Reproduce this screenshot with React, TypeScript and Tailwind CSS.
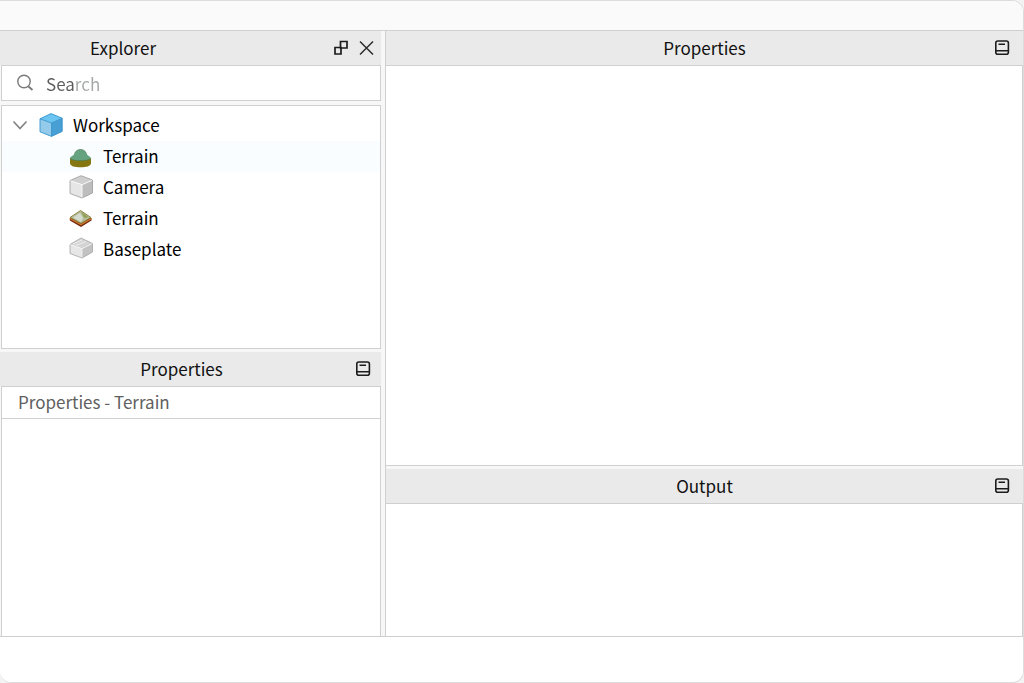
import type { ReactNode } from 'react'

type TreeItem = {
  id: string
  name: string
  icon: ReactNode
  hovered?: boolean
}

function CubeIcon() {
  return (
    <svg width="24" height="24" viewBox="0 0 24 24" aria-hidden="true">
      <path d="M12 0.6 23.200 5.200 12.500 10 1 5.800Z" fill="#6cc4f0" />
      <path d="M1 5.800 12.500 10V23.400L1 18.800Z" fill="#94caea" />
      <path d="M12.500 10 23.200 5.200V18.400L12.500 23.400Z" fill="#489fd3" />
      <path
        d="M12 0.6 23.200 5.200V18.400L12.500 23.400 1 18.800V5.800ZM1 5.800 12.500 10 23.200 5.200M12.500 10V23.400"
        fill="none"
        stroke="#3794cd"
        strokeWidth="0.9"
        strokeLinejoin="round"
      />
    </svg>
  )
}

function HillIcon() {
  return (
    <svg width="24" height="24" viewBox="0 0 24 24" aria-hidden="true">
      <path d="M1 14V19C1 22.300 6 23.300 11.500 23.300S22 22.300 22 19V14Z" fill="#85760f" />
      <path
        d="M1 14.500C1.500 12 4 12.500 5.500 9.500 7 6.500 9 5.500 11.500 5.500S16 6.500 17.500 9.500C19 12.500 21.500 12 22 14.500 20 16 16 16.500 11.500 16.500S3 16 1 14.500Z"
        fill="#65a27f"
      />
      <path
        d="M1.200 14.500C3 16.200 7 16.700 11.500 16.700S20 16.200 21.800 14.500M5.500 9.500C7 6.500 9 5.500 11.500 5.500S16 6.500 17.500 9.500"
        fill="none"
        stroke="#4b7d52"
        strokeWidth="0.7"
      />
    </svg>
  )
}

function GrayCubeIcon() {
  return (
    <svg width="24" height="24" viewBox="0 0 24 24" aria-hidden="true">
      <path d="M12 0.700 23.500 5 13 9.500 1 5.500Z" fill="#cfcfcf" />
      <path d="M1 5.500 13 9.500V23L1 18.500Z" fill="#e6e6e6" />
      <path d="M13 9.500 23.500 5V18L13 23Z" fill="#bdbdbd" />
      <path
        d="M12 0.700 23.500 5V18L13 23 1 18.500V5.500Z"
        fill="none"
        stroke="#9b9b9b"
        strokeWidth="0.8"
        strokeLinejoin="round"
      />
      <path d="M1.500 5.800 13 9.700 23 5.400M13 9.700V22.500" fill="none" stroke="#f7f7f7" strokeWidth="1" />
    </svg>
  )
}

function TileIcon() {
  return (
    <svg width="24" height="24" viewBox="0 0 24 24" aria-hidden="true">
      <path d="M0.800 12V14.500L12 21 22.500 14.500V12Z" fill="#762c12" />
      <path d="M1 12.500 12 18.500 22.500 12.500" fill="none" stroke="#d97c2b" strokeWidth="1.200" />
      <path d="M11.500 4.500 22 11.500 12 17.500 1 11.500Z" fill="#b5bd98" stroke="#80702c" strokeWidth="0.8" />
      <path d="M11 7 14 12 12 16 4 11.500Z" fill="#d5dccf" />
      <path d="M12 6 19.500 11 15.500 12Z" fill="#8fa054" />
    </svg>
  )
}

function SlabIcon() {
  return (
    <svg width="24" height="24" viewBox="0 0 24 24" aria-hidden="true">
      <path d="M12 1 23.500 6.500 13 11.500 1 7.500Z" fill="#d4d4d4" />
      <path d="M1 7.500 13 11.500V21L1 16.500Z" fill="#e6e6e6" />
      <path d="M13 11.500 23.500 6.500V15L13 21Z" fill="#c2c2c2" />
      <path
        d="M12 1 23.500 6.500V15L13 21 1 16.500V7.500Z"
        fill="none"
        stroke="#a3a3a3"
        strokeWidth="0.8"
        strokeLinejoin="round"
      />
      <path d="M1.500 7.700 13 11.700 23 6.800M13 11.700V20.500M4 7 13 3M7 8.500 17 4.500" fill="none" stroke="#f5f5f5" strokeWidth="0.8" />
    </svg>
  )
}

function DockIcon() {
  return (
    <svg width="16" height="16" viewBox="0 0 16 16" fill="none" stroke="#1c1c1c" strokeWidth="1.600" aria-hidden="true">
      <rect x="1.800" y="1" width="12.600" height="13.300" rx="2" />
      <path d="M1.800 10.700H14.400M4.500 4.300H11" />
    </svg>
  )
}

function FloatIcon() {
  return (
    <svg width="16" height="16" viewBox="0 0 16 16" fill="none" stroke="#1c1c1c" strokeWidth="1.700" aria-hidden="true">
      <path d="M7.500 1.500H14V8H7.500ZM2 7.500H8V14H2Z" />
    </svg>
  )
}

function CloseIcon() {
  return (
    <svg width="16" height="16" viewBox="0 0 16 16" fill="none" stroke="#2c2c2c" strokeWidth="1.500" aria-hidden="true">
      <path d="M1 1.500 14 14.500M14 1.500 1 14.500" />
    </svg>
  )
}

function SearchIcon() {
  return (
    <svg width="18" height="18" viewBox="0 0 18 18" fill="none" stroke="#7a7a7a" strokeWidth="1.400" aria-hidden="true">
      <circle cx="8" cy="7.500" r="6.200" />
      <path d="M12.500 12.500 16.500 16" strokeWidth="1.900" />
    </svg>
  )
}

function ChevronIcon() {
  return (
    <svg width="16" height="16" viewBox="0 0 16 16" fill="none" stroke="#858585" strokeWidth="1.700" aria-hidden="true">
      <path d="M1.500 4.500 8 11.500 14.500 4.500" />
    </svg>
  )
}

function DockButton({ label }: { label: string }) {
  return (
    <div className="absolute inset-y-0 right-[13px] flex items-center">
      <button type="button" aria-label={label}>
        <DockIcon />
      </button>
    </div>
  )
}

const items: TreeItem[] = [
  { id: 'terrain-hill', name: 'Terrain', icon: <HillIcon />, hovered: true },
  { id: 'camera', name: 'Camera', icon: <GrayCubeIcon /> },
  { id: 'terrain-tile', name: 'Terrain', icon: <TileIcon /> },
  { id: 'baseplate', name: 'Baseplate', icon: <SlabIcon /> },
]

export default function App() {
  return (
    <div className="h-screen bg-[#f3f3f3] font-['Noto_Sans_CJK_SC',sans-serif] text-[17px] leading-6 text-[#111]">
      <div className="flex h-full flex-col overflow-hidden rounded-b-xl rounded-tr-xl border-y border-r border-[#dcdcdc] bg-white">
        {/* Title strip */}
        <header className="h-[30px] shrink-0 border-b border-[#cfd1d1] bg-[#fafafa]" />

        <main className="flex min-h-0 flex-1 border-b border-[#cfcfcf] bg-[#f7f7f7]">
          {/* Left dock */}
          <div className="flex w-[381px] shrink-0 flex-col">
            <section aria-label="Explorer" className="flex min-h-0 flex-col">
              <div className="flex h-[34px] shrink-0 items-center bg-[#eaeaea] pr-1.5">
                <h2 className="w-[246px] text-center">Explorer</h2>
                <div className="ml-auto flex gap-2.5">
                  <button type="button" aria-label="Float panel">
                    <FloatIcon />
                  </button>
                  <button type="button" aria-label="Close panel">
                    <CloseIcon />
                  </button>
                </div>
              </div>

              <label className="ml-px flex h-9 shrink-0 items-center border border-[#cfd1d1] bg-white pl-3.5">
                <SearchIcon />
                <input
                  type="text"
                  aria-label="Search"
                  placeholder="Search"
                  className="ml-3 min-w-0 flex-1 bg-transparent pt-0.5 outline-none placeholder:bg-[linear-gradient(90deg,#5c5c5c_28px,#a3a7a7_28px)] placeholder:bg-clip-text placeholder:text-transparent"
                />
              </label>

              <div className="mt-1 ml-px h-[244px] border border-[#cfd1d1] bg-white text-black">
                <div className="flex h-[35px] items-center pt-0.5 pl-2.5">
                  <button type="button" aria-label="Collapse Workspace">
                    <ChevronIcon />
                  </button>
                  <span className="ml-[11px]">
                    <CubeIcon />
                  </span>
                  <span className="ml-2.5">Workspace</span>
                </div>
                <ul className="grid auto-rows-[31px]">
                  {items.map((item) => (
                    <li
                      key={item.id}
                      className={`flex items-center gap-2.5 pb-0.5 pl-[67px] ${item.hovered ? 'bg-[#f9fdff]' : ''}`}
                    >
                      {item.icon}
                      <span>{item.name}</span>
                    </li>
                  ))}
                </ul>
              </div>
            </section>

            <section aria-label="Selection properties" className="mt-[3px] flex min-h-0 flex-1 flex-col">
              <div className="relative flex h-[34px] shrink-0 items-center justify-center bg-[#eaeaea] pr-4.5">
                <h2>Properties</h2>
                <div className="absolute inset-y-0 right-2.5 flex items-center">
                  <button type="button" aria-label="Dock properties">
                    <DockIcon />
                  </button>
                </div>
              </div>
              <div className="ml-px flex-1 border-x border-t border-[#cfd1d1] bg-white">
                <p className="h-8 border-b border-[#cfd1d1] pt-[3px] pl-4 text-[#606060]">Properties - Terrain</p>
              </div>
            </section>
          </div>

          {/* Right dock */}
          <div className="ml-1 flex min-w-0 flex-1 flex-col border-l border-[#cfd1d1]">
            <section aria-label="Properties" className="flex min-h-0 flex-1 flex-col">
              <div className="relative flex h-[34px] shrink-0 items-center justify-center bg-[#eaeaea]">
                <h2>Properties</h2>
                <DockButton label="Dock properties" />
              </div>
              <div className="flex-1 border-y border-r border-[#cfd1d1] bg-white" />
            </section>

            <section aria-label="Output" className="mt-[3px]">
              <div className="relative flex h-[34px] items-center justify-center bg-[#eaeaea]">
                <h2>Output</h2>
                <DockButton label="Dock output" />
              </div>
              <div className="h-[133px] border-t border-r border-[#cfd1d1] bg-white" />
            </section>
          </div>
        </main>

        {/* Status strip */}
        <footer className="h-[45px] shrink-0 bg-white" />
      </div>
    </div>
  )
}
